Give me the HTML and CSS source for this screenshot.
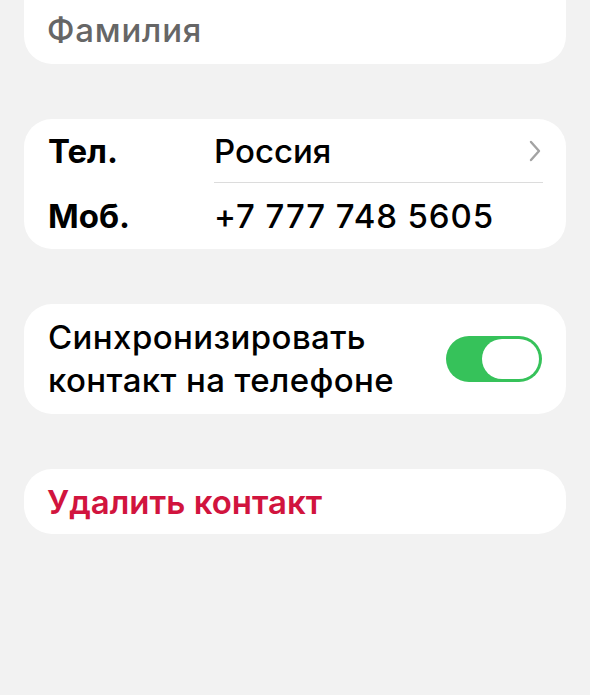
FILE: index.html
```html
<!DOCTYPE html>
<html lang="ru">
<head>
    <meta charset="UTF-8">
    <meta name="viewport" content="width=device-width, initial-scale=1.0">
    <title>Контакт</title>
    <link rel="stylesheet" href="styles.css">
</head>
<body>
    <div class="page">
        <div class="card card-name">
            <div class="name-field">Фамилия</div>
        </div>

        <div class="card card-phones">
            <div class="phone-row">
                <span class="phone-label">Тел.</span>
                <div class="phone-value with-line">
                    <span>Россия</span>
                    <svg class="chevron" width="12" height="24" viewBox="0 0 12 24">
                        <path d="M2 3 L10 12 L2 21" fill="none" stroke="#a3a3a3" stroke-width="2.4" stroke-linecap="round" stroke-linejoin="round"/>
                    </svg>
                </div>
            </div>
            <div class="phone-row">
                <span class="phone-label">Моб.</span>
                <div class="phone-value phone-number">+7 777 748 5605</div>
            </div>
        </div>

        <div class="card card-sync">
            <div class="sync-text">Синхронизировать<br>контакт на телефоне</div>
            <div class="toggle on"><div class="toggle-thumb"></div></div>
        </div>

        <div class="card card-delete">
            <span class="delete-btn">Удалить контакт</span>
        </div>
    </div>
</body>
</html>
```

FILE: styles.css
```css
body { margin: 0; background: #f2f2f2; font-family: Inter, "Noto Sans", sans-serif; color: #000; }
.page { padding: 0 24px; margin-top: -36px; display: flex; flex-direction: column; gap: 55px; }
.card { background: #fff; border-radius: 28px; }

.card-name { height: 100px; display: flex; align-items: flex-end; padding: 0 23px; box-sizing: border-box; }
.name-field { font-size: 33px; font-weight: 500; letter-spacing: 0.8px; color: #666; height: 64px; line-height: 64px; padding-bottom: 2px; }

.card-phones { padding: 0 23px 0 24px; }
.phone-row { display: flex; align-items: stretch; height: 64px; }
.phone-row + .phone-row { height: 66px; }
.phone-label { width: 166px; font-size: 33px; font-weight: 700; display: flex; align-items: center; }
.phone-value { flex: 1; font-size: 33px; font-weight: 500; display: flex; align-items: center; justify-content: space-between; }
.phone-number { letter-spacing: 0.9px; }
.phone-value.with-line { border-bottom: 1.5px solid #dcdcdc; }
.chevron { margin-right: 2px; }

.card-sync { height: 110px; padding: 0 24px 0 24px; display: flex; align-items: center; justify-content: space-between; }
.sync-text { font-size: 33px; font-weight: 500; letter-spacing: 0.4px; line-height: 43px; }
.toggle { width: 96px; height: 46px; border-radius: 23px; background: #36c25a; display: flex; align-items: center; justify-content: flex-end; padding: 0 3px; box-sizing: border-box; }
.toggle-thumb { width: 57px; height: 40px; border-radius: 20px; background: #fff; }

.card-delete { height: 65px; display: flex; align-items: center; padding: 0 23px; }
.delete-btn { font-size: 33px; font-weight: 600; color: #d1143e; }
```
